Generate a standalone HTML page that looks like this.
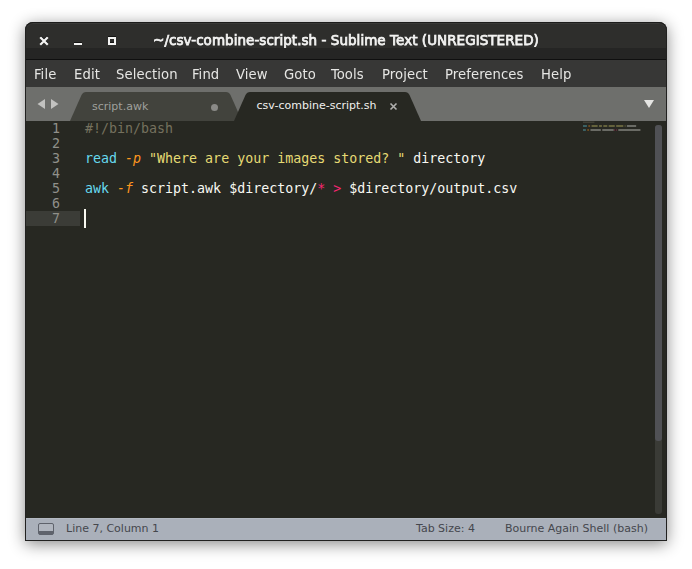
<!DOCTYPE html>
<html>
<head>
<meta charset="utf-8">
<title>Sublime Text</title>
<style>
html,body{margin:0;padding:0;background:#fff;}
body{width:692px;height:569px;position:relative;overflow:hidden;font-family:"DejaVu Sans","Liberation Sans",sans-serif;}
#win{position:absolute;left:25px;top:22px;width:642px;height:519px;border-radius:8px 8px 0 0;background:#272822;
  box-shadow:0 3px 16px 0 rgba(0,0,0,.47);overflow:hidden;}
#win>div{position:absolute;left:0;right:0;}
#title{top:0;height:26px;background:#2e2e2c;}
#title2{top:26px;height:11px;background:#252524;}
#tline{top:37px;height:1px;background:#0f0f0f;}
#menu{top:38px;height:27px;background:#373736;}
#tabs{top:65px;height:34px;background:#6e6f6c;}
#editor{top:99px;height:397px;background:#272822;}
#status{top:496px;height:22px;background:#aab0ba;box-shadow:inset 0 1px 0 #b3b9c2;}
#bord{top:0;bottom:0;border:1px solid #212120;border-top-color:#1c1c1b;border-radius:8px 8px 0 0;box-shadow:inset 0 1px 0 rgba(255,255,255,.055);pointer-events:none;}
.ttxt{will-change:transform;position:absolute;left:0;right:0;top:9px;text-align:center;color:#f3f3f2;font-family:"DejaVu Sans","Liberation Sans",sans-serif;font-weight:normal;font-size:13.5px;-webkit-text-stroke:0.75px #f3f3f2;letter-spacing:0.04px;line-height:18px;white-space:nowrap;}
.mi{will-change:transform;position:absolute;top:5px;color:#e6e6e4;font-family:"DejaVu Sans Condensed","DejaVu Sans","Liberation Sans",sans-serif;font-size:14.67px;letter-spacing:0.1px;line-height:18px;white-space:nowrap;}
.tab{position:absolute;font-size:11px;line-height:14px;white-space:nowrap;}
.code{position:absolute;font-family:"DejaVu Sans Mono","Liberation Mono",monospace;font-size:13.3px;line-height:15px;white-space:pre;color:#f8f8f2;}
.ln{position:absolute;font-family:"DejaVu Sans Mono","Liberation Mono",monospace;font-size:13.3px;line-height:15px;color:#90908a;width:35px;text-align:right;left:0;}
.st{position:absolute;top:4px;font-size:11px;line-height:14px;color:#45474d;white-space:nowrap;}
</style>
</head>
<body>
<div id="win">
  <div id="title">
    <svg style="position:absolute;left:0;top:0" width="120" height="26" viewBox="0 0 120 26">
      <g opacity="0.55"><path d="M16 15 L22 21 M22 15 L16 21" stroke="#000" stroke-width="2.2" stroke-linecap="square" fill="none"/>
      <rect x="49" y="20" width="8" height="2" fill="#000"/>
      <rect x="84" y="15" width="6" height="6" fill="none" stroke="#000" stroke-width="2"/></g>
      <path d="M16 16 L22 22 M22 16 L16 22" stroke="#f3f3f2" stroke-width="2.2" stroke-linecap="square" fill="none"/>
      <rect x="49" y="21" width="8" height="2" fill="#f3f3f2"/>
      <rect x="84" y="16" width="6" height="6" fill="none" stroke="#f3f3f2" stroke-width="2"/>
    </svg>
    <div class="ttxt">~/csv-combine-script.sh - Sublime Text (UNREGISTERED)</div>
  </div>
  <div id="title2"></div>
  <div id="tline"></div>
  <div id="menu">
    <span class="mi" style="left:9px">File</span>
    <span class="mi" style="left:49px">Edit</span>
    <span class="mi" style="left:91px">Selection</span>
    <span class="mi" style="left:167px">Find</span>
    <span class="mi" style="left:211px">View</span>
    <span class="mi" style="left:259px">Goto</span>
    <span class="mi" style="left:306px">Tools</span>
    <span class="mi" style="left:357px">Project</span>
    <span class="mi" style="left:420px">Preferences</span>
    <span class="mi" style="left:516px">Help</span>
  </div>
  <div id="tabs">
    <svg style="position:absolute;left:0;top:0" width="642" height="34" viewBox="0 0 642 34">
      <path d="M12.5 17 L20 12 L20 22 Z" fill="#c2c2c0"/>
      <path d="M33.5 17 L26 12 L26 22 Z" fill="#c2c2c0"/>
      <path d="M45 34 L56.5 8 Q58 5 61 5 L201 5 Q204 5 205.5 8 L217 34 Z" fill="#42433d"/>
      <path d="M209 34 L220.5 8 Q222 5 225 5 L380 5 Q383 5 384.5 8 L396 34 Z" fill="#272822"/>
      <circle cx="189.5" cy="20.5" r="3.5" fill="#8a8a87"/>
      <path d="M365.5 16.5 L371.5 22.5 M371.5 16.5 L365.5 22.5" stroke="#b0b0ae" stroke-width="1.6" fill="none"/>
      <path d="M619 13 L629 13 L624 21 Z" fill="#e5e5e3"/>
    </svg>
    <span class="tab" style="left:67px;top:13px;color:#9fa09c">script.awk</span>
    <span class="tab" style="left:231.5px;top:12px;color:#f0f0ee">csv-combine-script.sh</span>
  </div>
  <div id="editor">
    <div style="position:absolute;left:0;top:90px;width:55px;height:15px;background:#3b3c37"></div>
    <div class="ln" style="top:0px">1</div>
    <div class="ln" style="top:15px">2</div>
    <div class="ln" style="top:30px">3</div>
    <div class="ln" style="top:45px">4</div>
    <div class="ln" style="top:60px">5</div>
    <div class="ln" style="top:75px">6</div>
    <div class="ln" style="top:90px">7</div>
    <div class="code" style="left:60px;top:0px"><span style="color:#75715e">#!/bin/bash</span></div>
    <div class="code" style="left:60px;top:30px"><span style="color:#66d9ef">read</span> <span style="color:#fd971f;font-style:italic">-p</span> <span style="color:#e6db74">"Where are your images stored? "</span> directory</div>
    <div class="code" style="left:60px;top:60px"><span style="color:#66d9ef">awk</span> <span style="color:#fd971f;font-style:italic">-f</span> script.awk $directory/<span style="color:#f92672">* &gt;</span> $directory/output.csv</div>
    <div style="position:absolute;left:59px;top:88px;width:2px;height:19px;background:#f8f8f0"></div>
    <svg style="position:absolute;left:550px;top:0" width="80" height="12" viewBox="0 0 80 12" opacity="0.32">
      <rect x="8.00" y="0.5" width="11.42" height="1.5" fill="#75715e"/><rect x="8.00" y="4" width="3.93" height="2" fill="#66d9ef"/><rect x="13.35" y="4" width="1.79" height="2" fill="#fd971f"/><rect x="16.56" y="4" width="6.07" height="2" fill="#e6db74"/><rect x="24.05" y="4" width="2.86" height="2" fill="#e6db74"/><rect x="28.33" y="4" width="3.93" height="2" fill="#e6db74"/><rect x="33.68" y="4" width="6.07" height="2" fill="#e6db74"/><rect x="41.17" y="4" width="7.14" height="2" fill="#e6db74"/><rect x="49.73" y="4" width="0.72" height="2" fill="#e6db74"/><rect x="51.87" y="4" width="9.28" height="2" fill="#f8f8f2"/><rect x="8.00" y="8" width="2.86" height="2" fill="#66d9ef"/><rect x="12.28" y="8" width="1.79" height="2" fill="#fd971f"/><rect x="15.49" y="8" width="10.35" height="2" fill="#f8f8f2"/><rect x="27.26" y="8" width="11.42" height="2" fill="#f8f8f2"/><rect x="39.03" y="8" width="0.72" height="2" fill="#f92672"/><rect x="41.17" y="8" width="0.72" height="2" fill="#f92672"/><rect x="43.31" y="8" width="22.12" height="2" fill="#f8f8f2"/>
    </svg>
    <div style="position:absolute;left:630px;top:4px;width:7px;height:389px;background:#3a3b36;border-radius:3px"></div>
    <div style="position:absolute;left:630px;top:4px;width:7px;height:316px;background:#505155;border-radius:3px"></div>
  </div>
  <div id="status">
    <svg style="position:absolute;left:13px;top:5px" width="16" height="12" viewBox="0 0 16 12">
      <rect x="0.5" y="0.5" width="15" height="11" rx="1.5" fill="#b0b5be" stroke="#5e626b" stroke-width="1"/>
      <rect x="1" y="8" width="14" height="3.5" fill="#5f636c"/>
    </svg>
    <span class="st" style="left:41px">Line 7, Column 1</span>
    <span class="st" style="left:391px">Tab Size: 4</span>
    <span class="st" style="left:480px">Bourne Again Shell (bash)</span>
  </div>
  <div id="bord"></div>
</div>
</body>
</html>
